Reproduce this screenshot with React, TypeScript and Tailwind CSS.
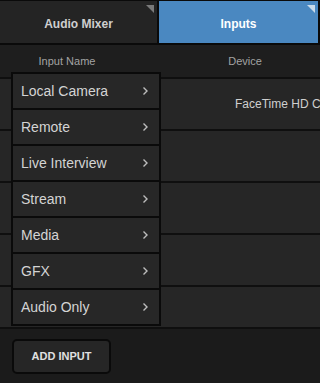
import React from "react";

const items = ["Local Camera", "Remote", "Live Interview", "Stream", "Media", "GFX", "Audio Only"];

function Chevron() {
  return (
    <svg width="7" height="10" viewBox="0 0 7 10" className="shrink-0">
      <path d="M1.5 1.5 L5 5 L1.5 8.5" fill="none" stroke="#bdbdbd" strokeWidth="1.4" />
    </svg>
  );
}

function Corner({ color }: { color: string }) {
  return (
    <svg width="8" height="8" viewBox="0 0 8 8" className="absolute right-[3px] top-[4px]">
      <path d="M0 0 L8 0 L8 8 Z" fill={color} />
    </svg>
  );
}

export default function App() {
  return (
    <div
      className="relative w-[320px] h-[383px] overflow-hidden bg-[#1b1b1b] flex flex-col"
      style={{ fontFamily: '"Liberation Sans", Arial, sans-serif' }}
    >
      {/* Tabs */}
      <div className="flex h-[45px] border-t border-b-2 border-[#0a0a0a] shrink-0">
        <div className="relative w-[159px] bg-[#242424] border-r-2 border-[#0a0a0a] flex items-center justify-center pt-[3px]">
          <span className="text-[12px] font-bold text-[#cfcfcf]">Audio Mixer</span>
          <Corner color="#7a7a7a" />
        </div>
        <div className="relative flex-1 bg-[#4a88c1] border-r-2 border-[#0a0a0a] flex items-center justify-center pt-[3px]">
          <span className="text-[12px] font-bold text-white">Inputs</span>
          <Corner color="#c9dbeb" />
        </div>
      </div>

      {/* Header */}
      <div className="flex h-[34px] shrink-0 bg-[#1e1e1e] border-b-2 border-[#0f0f0f] items-center">
        <div className="w-[134px] text-center text-[11px] text-[#a3a3a3]">Input Name</div>
        <div className="w-[36px]" />
        <div className="w-[150px] text-center text-[11px] text-[#a3a3a3]">Device</div>
      </div>

      {/* Rows */}
      <div className="h-[248px] shrink-0 overflow-hidden flex flex-col">
        {[0, 1, 2, 3, 4].map((i) => (
          <div key={i} className="h-[52px] shrink-0 bg-[#262626] border-b-2 border-[#0f0f0f] flex items-center overflow-hidden">
            {i === 0 && (
              <span className="ml-[235px] whitespace-nowrap text-[12px] text-[#cfcfcf]">FaceTime HD Camera</span>
            )}
          </div>
        ))}
      </div>

      {/* Bottom */}
      <div className="flex-1 bg-[#1b1b1b] border-t-2 border-[#0f0f0f] pt-[10px] pl-[12px]">
        <button className="w-[99px] h-[35px] rounded-[5px] bg-[#262626] border-2 border-[#0a0a0a] text-[11px] font-bold text-[#e0e0e0]">
          ADD INPUT
        </button>
      </div>

      {/* Menu */}
      <div className="absolute left-[11px] top-[72px] w-[150px] bg-[#0a0a0a] p-[2px] flex flex-col gap-[2px]">
        {items.map((t) => (
          <div key={t} className="h-[34px] bg-[#272727] flex items-center justify-between pl-[8px] pr-[10px]">
            <span className="text-[14px] text-[#d4d4d4]">{t}</span>
            <Chevron />
          </div>
        ))}
      </div>
    </div>
  );
}
